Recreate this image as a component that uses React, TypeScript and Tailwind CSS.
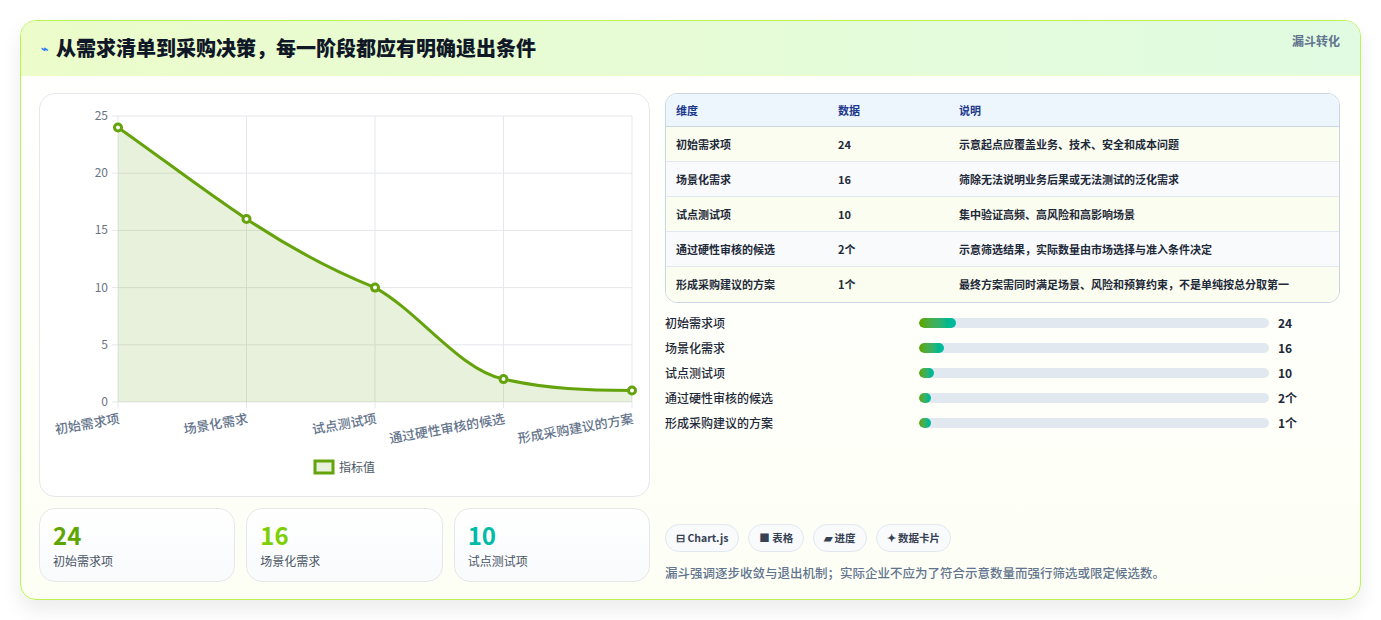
const F = { fontFamily: '"Noto Sans CJK SC", "Noto Sans", sans-serif' }

const rows = [
  { k: "初始需求项", v: "24", n: 24, d: "示意起点应覆盖业务、技术、安全和成本问题" },
  { k: "场景化需求", v: "16", n: 16, d: "筛除无法说明业务后果或无法测试的泛化需求" },
  { k: "试点测试项", v: "10", n: 10, d: "集中验证高频、高风险和高影响场景" },
  { k: "通过硬性审核的候选", v: "2个", n: 2, d: "示意筛选结果，实际数量由市场选择与准入条件决定" },
  { k: "形成采购建议的方案", v: "1个", n: 1, d: "最终方案需同时满足场景、风险和预算约束，不是单纯按总分取第一" },
]

function Chart() {
  const x0 = 78, x1 = 592, y0 = 22, y1 = 308
  const xs = rows.map((_, i) => x0 + ((x1 - x0) * i) / 4)
  const ys = rows.map((r) => y1 - ((y1 - y0) * r.n) / 25)
  const line = `M${xs[0]},${ys[0]} C${xs[0] + 40},${ys[0] + 28} ${xs[1] - 45},${ys[1] - 30} ${xs[1]},${ys[1]} C${xs[1] + 45},${ys[1] + 30} ${xs[2] - 45},${ys[2] - 18} ${xs[2]},${ys[2]} C${xs[2] + 45},${ys[2] + 25} ${xs[3] - 45},${ys[3] - 10} ${xs[3]},${ys[3]} C${xs[3] + 45},${ys[3] + 10} ${xs[4] - 45},${ys[4]} ${xs[4]},${ys[4]}`
  return (
    <svg width="610" height="403" className="block">
      {[0, 5, 10, 15, 20, 25].map((t) => {
        const y = y1 - ((y1 - y0) * t) / 25
        return (
          <g key={t}>
            <line x1={x0 - 6} x2={x1} y1={y} y2={y} stroke="#e5e7eb" />
            <text x={x0 - 10} y={y + 4} textAnchor="end" fontSize="12" fill="#6b7280" style={F}>{t}</text>
          </g>
        )
      })}
      {xs.map((x, i) => (
        <g key={i}>
          <line x1={x} x2={x} y1={y0} y2={y1 + 6} stroke="#e5e7eb" />
          <text x={x + 2} y={y1 + 21} textAnchor="end" fontSize="13" fontWeight="500" fill="#64748b" transform={`rotate(-10 ${x + 2} ${y1 + 21})`} style={F}>{rows[i].k}</text>
        </g>
      ))}
      <path d={`${line} L${xs[4]},${y1} L${xs[0]},${y1} Z`} fill="#65a30d" fillOpacity="0.15" />
      <path d={line} fill="none" stroke="#65a30d" strokeWidth="3" />
      {xs.map((x, i) => <circle key={i} cx={x} cy={ys[i]} r="3.5" fill="#fff" stroke="#65a30d" strokeWidth="3" />)}
      <rect x="275" y="367" width="18" height="12" fill="#65a30d" fillOpacity="0.15" stroke="#65a30d" strokeWidth="3" />
      <text x="299" y="378" fontSize="12" fill="#4b5563" style={F}>指标值</text>
    </svg>
  )
}

export default function App() {
  return (
    <div className="bg-white p-5 h-[620px]" style={F}>
      <div className="rounded-2xl border border-lime-300 bg-gradient-to-b from-white to-[#fdfff5] shadow-[0_10px_20px_rgba(0,0,0,0.08)] overflow-hidden h-[580px]">
        <div className="h-[55px] flex items-start justify-between px-5 pt-3 bg-gradient-to-r from-lime-100 to-[#e0fbe2] border-b border-lime-100">
          <div className="flex items-center gap-2 text-[20px] font-black text-gray-900">
            <span className="text-blue-500 text-xs">⌁</span>从需求清单到采购决策，每一阶段都应有明确退出条件
          </div>
          <div className="text-xs font-bold text-slate-500">漏斗转化</div>
        </div>
        <div className="flex gap-[15px] pl-[18px] pr-5 pt-[17px]">
          <div className="w-[611px] shrink-0 flex flex-col gap-[11px]">
            <div className="rounded-2xl border border-gray-200 bg-white h-[404px] overflow-hidden"><Chart /></div>
            <div className="grid grid-cols-3 gap-[11px]">
              {[["24", "初始需求项", "text-lime-600"], ["16", "场景化需求", "text-lime-500"], ["10", "试点测试项", "text-teal-500"]].map(([v, l, c]) => (
                <div key={l} className="rounded-2xl border border-gray-200 bg-gradient-to-b from-white to-slate-50 h-[74px] px-[13px] pt-[10px]">
                  <div className={`text-[24px] font-bold leading-8 ${c}`}>{v}</div>
                  <div className="text-xs text-gray-600 mt-[2px]">{l}</div>
                </div>
              ))}
            </div>
          </div>
          <div className="flex-1 flex flex-col">
            <div className="rounded-xl border border-slate-300 overflow-hidden text-[11px] font-semibold text-gray-800">
              <div className="flex h-[33px] items-center bg-[#edf5fd] text-blue-900 border-b border-slate-300">
                <div className="w-[172px] shrink-0 pl-[10px]">维度</div><div className="w-[121px] shrink-0">数据</div><div>说明</div>
              </div>
              {rows.map((r, i) => (
                <div key={r.k} className={`flex h-[35px] items-center ${i % 2 ? "bg-slate-50" : "bg-[#fbfdf0]"} ${i < 4 ? "border-b border-slate-200" : ""}`}>
                  <div className="w-[172px] shrink-0 pl-[10px]">{r.k}</div><div className="w-[121px] shrink-0">{r.v}</div><div className="whitespace-nowrap">{r.d}</div>
                </div>
              ))}
            </div>
            <div className="flex flex-col gap-[8px] mt-[11px]">
              {rows.map((r) => (
                <div key={r.k} className="flex items-center h-[17px] text-xs text-gray-800">
                  <div className="w-[254px] shrink-0 font-medium">{r.k}</div>
                  <div className="w-[350px] shrink-0 h-[10px] rounded-full bg-slate-200 overflow-hidden">
                    <div className="h-full rounded-full bg-gradient-to-r from-lime-600 to-teal-500" style={{ width: Math.max(12, (r.n / 24) * 37) }} />
                  </div>
                  <div className="ml-[9px] font-bold">{r.v}</div>
                </div>
              ))}
            </div>
            <div className="flex gap-[9px] mt-[93px] text-[10.5px] font-semibold text-gray-700">
              {["⊟ Chart.js", "■ 表格", "▰ 进度", "✦ 数据卡片"].map((c) => (
                <div key={c} className="h-[28px] px-[10px] flex items-center rounded-full border border-slate-200 bg-slate-50">{c}</div>
              ))}
            </div>
            <div className="mt-[12px] text-[12.5px] font-medium text-slate-500">漏斗强调逐步收敛与退出机制；实际企业不应为了符合示意数量而强行筛选或限定候选数。</div>
          </div>
        </div>
      </div>
    </div>
  )
}
